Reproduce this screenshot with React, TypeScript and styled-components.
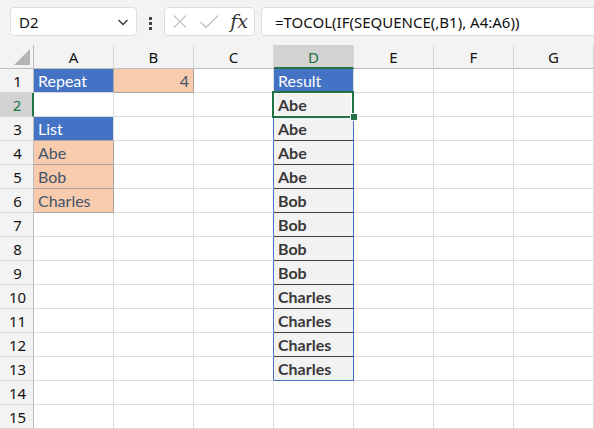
import styled, { createGlobalStyle } from 'styled-components';

const GlobalStyle = createGlobalStyle`
  html, body {
    margin: 0;
    padding: 0;
    background: #ffffff;
    overflow: hidden;
  }
`;

const GREEN = '#217346';
const BLUE = '#4472c4';
const PEACH = '#f8cbad';
const GRID = '#dcdcdc';

const Page = styled.div`
  width: 594px;
  height: 429px;
  display: flex;
  flex-direction: column;
  font-family: 'Noto Sans', 'Open Sans', sans-serif;
  background: #f3f3f3;
  overflow: hidden;
`;

const Toolbar = styled.div`
  height: 45px;
  display: flex;
  align-items: flex-start;
  padding: 7px 0 0 10px;
  box-sizing: border-box;
`;

const Box = styled.div<{ $w?: number; $grow?: boolean }>`
  height: 29px;
  box-sizing: border-box;
  background: #ffffff;
  border: 1px solid #dedede;
  border-radius: 4px;
  display: flex;
  align-items: center;
  ${(p) => (p.$w ? `width: ${p.$w}px; flex: none;` : '')}
  ${(p) => (p.$grow ? 'flex: 1; border-right: none; border-radius: 4px 0 0 4px;' : '')}
`;

const NameBox = styled(Box)`
  padding: 0 6px 0 8px;
  justify-content: space-between;
  font-size: 15px;
  color: #111;
`;

const Dots = styled.div`
  width: 27px;
  display: flex;
  flex-direction: column;
  align-items: center;
  gap: 2px;
  padding-top: 10px;
  span {
    width: 3px;
    height: 3px;
    background: #444;
  }
`;

const FxBox = styled(Box)`
  padding: 0 6px 0 7px;
  gap: 11px;
`;

const FxText = styled.span`
  font-family: 'DejaVu Serif', 'Liberation Serif', serif;
  font-style: italic;
  font-size: 19px;
  color: #333;
  margin-left: auto;
  line-height: 1;
`;

const FormulaBox = styled(Box)`
  margin-left: 6px;
  padding-left: 13px;
  font-size: 15px;
  color: #111;
  white-space: nowrap;
`;

const Sheet = styled.div`
  position: relative;
  display: grid;
  grid-template-columns: 34px repeat(7, 80px);
  grid-auto-rows: 24px;
  font-family: 'Lato', 'Liberation Sans', sans-serif;
`;

const Corner = styled.div`
  background: #f3f3f3;
  border-right: 1px solid #bdbdbd;
  border-bottom: 1px solid #bdbdbd;
  box-sizing: border-box;
  display: flex;
  align-items: flex-end;
  justify-content: flex-end;
  padding: 0 3px 3px 0;
`;

const ColHead = styled.div<{ $active?: boolean }>`
  box-sizing: border-box;
  background: ${(p) => (p.$active ? '#d2d2d2' : '#f3f3f3')};
  border-right: 1px solid #d6d6d6;
  border-bottom: ${(p) => (p.$active ? `2px solid ${GREEN}` : '1px solid #bdbdbd')};
  color: ${(p) => (p.$active ? GREEN : '#111')};
  font-family: 'Noto Sans', 'Open Sans', sans-serif;
  font-size: 15px;
  display: flex;
  align-items: center;
  justify-content: center;
  padding-top: 1px;
`;

const RowHead = styled.div<{ $active?: boolean }>`
  box-sizing: border-box;
  background: ${(p) => (p.$active ? '#d2d2d2' : '#f3f3f3')};
  border-right: ${(p) => (p.$active ? `2px solid ${GREEN}` : '1px solid #bdbdbd')};
  border-bottom: 1px solid #d6d6d6;
  color: ${(p) => (p.$active ? GREEN : '#111')};
  font-family: 'Noto Sans', 'Open Sans', sans-serif;
  font-size: 15px;
  display: flex;
  align-items: center;
  justify-content: center;
  padding-left: 2px;
`;

type Kind = 'plain' | 'head' | 'peach' | 'spill';

const Cell = styled.div<{ $kind: Kind; $right?: string; $bottom?: string; $align?: string }>`
  box-sizing: border-box;
  border-right: 1px solid ${(p) => p.$right || GRID};
  border-bottom: 1px solid ${(p) => p.$bottom || GRID};
  display: flex;
  align-items: flex-end;
  justify-content: ${(p) => p.$align || 'flex-start'};
  padding: 0 4px 2px 4px;
  font-size: 16px;
  line-height: 19px;
  white-space: nowrap;
  background: ${(p) =>
    p.$kind === 'head' ? BLUE : p.$kind === 'peach' ? PEACH : p.$kind === 'spill' ? '#f2f2f2' : '#ffffff'};
  color: ${(p) =>
    p.$kind === 'head' ? '#ffffff' : p.$kind === 'peach' ? '#44546a' : '#3b3838'};
  font-weight: ${(p) => (p.$kind === 'spill' ? 700 : 400)};
`;

const Selection = styled.div`
  position: absolute;
  left: 272px;
  top: 46px;
  width: 82px;
  height: 27px;
  box-sizing: border-box;
  border: 2px solid ${GREEN};
  box-shadow: inset 0 0 0 1px #ffffff;
  pointer-events: none;
`;

const Handle = styled.div`
  position: absolute;
  left: 351px;
  top: 69px;
  width: 6px;
  height: 6px;
  background: ${GREEN};
  box-shadow: 0 0 0 1px #ffffff;
`;

const cols = ['A', 'B', 'C', 'D', 'E', 'F', 'G'];
const results = ['Abe', 'Abe', 'Abe', 'Abe', 'Bob', 'Bob', 'Bob', 'Bob', 'Charles', 'Charles', 'Charles', 'Charles'];

type CellData = { text?: string; kind: Kind; align?: string; right?: string; bottom?: string };

const cellAt = (row: number, col: number): CellData => {
  const peachBorder = '#a6a6a6';
  if (col === 0) {
    if (row === 1) return { text: 'Repeat', kind: 'head', right: peachBorder, bottom: GRID };
    if (row === 3) return { text: 'List', kind: 'head', bottom: peachBorder };
    if (row >= 4 && row <= 6)
      return { text: ['Abe', 'Bob', 'Charles'][row - 4], kind: 'peach', right: peachBorder, bottom: peachBorder };
  }
  if (col === 1 && row === 1) return { text: '4', kind: 'peach', align: 'flex-end', right: peachBorder, bottom: peachBorder };
  if (col === 2 && row >= 2 && row <= 13) return { kind: 'plain', right: BLUE };
  if (col === 3) {
    if (row === 1) return { text: 'Result', kind: 'head', bottom: BLUE };
    if (row >= 2 && row <= 13)
      return { text: results[row - 2], kind: 'spill', right: BLUE, bottom: row === 13 ? BLUE : '#404040' };
  }
  return { kind: 'plain' };
};

const DownChevron = () => (
  <svg width="14" height="14" viewBox="0 0 14 14" fill="none" stroke="#333" strokeWidth="1.3">
    <path d="M2.5 5 L7 9.5 L11.5 5" />
  </svg>
);

const Cross = () => (
  <svg width="17" height="17" viewBox="0 0 17 17" fill="none" stroke="#c4c4c4" strokeWidth="1.3">
    <path d="M2 2 L15 15 M15 2 L2 15" />
  </svg>
);

const Check = () => (
  <svg width="22" height="17" viewBox="0 0 22 17" fill="none" stroke="#c4c4c4" strokeWidth="1.3">
    <path d="M1.5 9 L7.5 15 L20.5 2" />
  </svg>
);

const CornerMark = () => (
  <svg width="16" height="16" viewBox="0 0 16 16">
    <polygon points="16,0 16,16 0,16" fill="#b4b4b4" />
  </svg>
);

export default function App() {
  const rows = Array.from({ length: 15 }, (_, i) => i + 1);
  return (
    <>
      <GlobalStyle />
      <Page>
        <Toolbar>
          <NameBox $w={127}>
            <span>D2</span>
            <DownChevron />
          </NameBox>
          <Dots>
            <span />
            <span />
            <span />
          </Dots>
          <FxBox $w={91}>
            <Cross />
            <Check />
            <FxText>fx</FxText>
          </FxBox>
          <FormulaBox $grow>=TOCOL(IF(SEQUENCE(,B1), A4:A6))</FormulaBox>
        </Toolbar>
        <Sheet>
          <Corner>
            <CornerMark />
          </Corner>
          {cols.map((c) => (
            <ColHead key={c} $active={c === 'D'}>
              {c}
            </ColHead>
          ))}
          {rows.map((r) => [
            <RowHead key={`h${r}`} $active={r === 2}>
              {r}
            </RowHead>,
            ...cols.map((c, ci) => {
              const d = cellAt(r, ci);
              return (
                <Cell key={`${c}${r}`} $kind={d.kind} $align={d.align} $right={d.right} $bottom={d.bottom}>
                  {d.text}
                </Cell>
              );
            }),
          ])}
          <Selection />
          <Handle />
        </Sheet>
      </Page>
    </>
  );
}
